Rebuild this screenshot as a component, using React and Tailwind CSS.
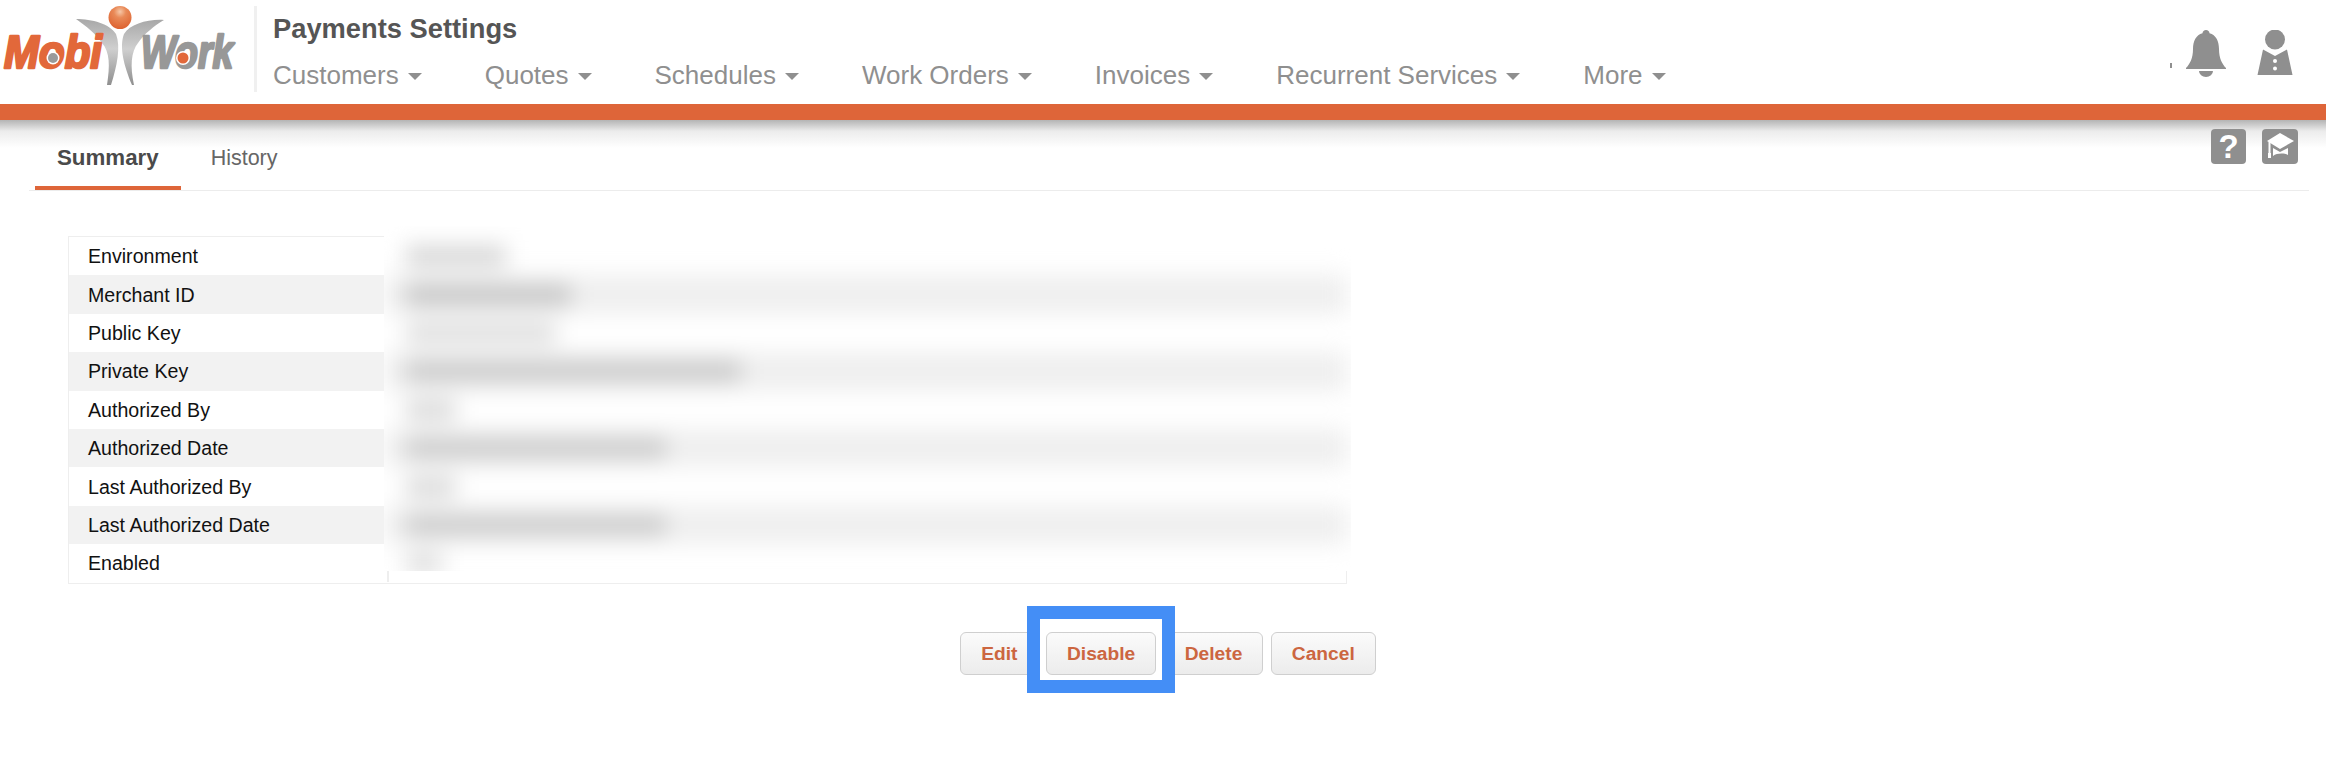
import React from 'react';

const navItems = ['Customers', 'Quotes', 'Schedules', 'Work Orders', 'Invoices', 'Recurrent Services', 'More'];

const rows = [
    { label: 'Environment', width: 'w-[100px]', tone: 'bg-[#d4d4d4]' },
    { label: 'Merchant ID', width: 'w-[165px]', tone: 'bg-[#c4c4c4]' },
    { label: 'Public Key', width: 'w-[150px]', tone: 'bg-[#dcdcdc]' },
    { label: 'Private Key', width: 'w-[335px]', tone: 'bg-[#c8c8c8]' },
    { label: 'Authorized By', width: 'w-[50px]', tone: 'bg-[#d8d8d8]' },
    { label: 'Authorized Date', width: 'w-[260px]', tone: 'bg-[#cacaca]' },
    { label: 'Last Authorized By', width: 'w-[50px]', tone: 'bg-[#d8d8d8]' },
    { label: 'Last Authorized Date', width: 'w-[260px]', tone: 'bg-[#cacaca]' },
    { label: 'Enabled', width: 'w-[36px]', tone: 'bg-[#dcdcdc]' },
];

const buttons = ['Edit', 'Disable', 'Delete', 'Cancel'];

const Logo = () => (
    <svg width="254" height="100" viewBox="0 0 254 100" className="shrink-0">
        <defs>
            <radialGradient id="ball" cx="50%" cy="25%" r="75%">
                <stop offset="0%" stopColor="#f6c8a8" />
                <stop offset="35%" stopColor="#e98a58" />
                <stop offset="100%" stopColor="#dd6230" />
            </radialGradient>
            <linearGradient id="limb" x1="0" y1="0" x2="0" y2="1">
                <stop offset="0%" stopColor="#a8a8a8" />
                <stop offset="45%" stopColor="#cfcfcf" />
                <stop offset="100%" stopColor="#8f8f8f" />
            </linearGradient>
        </defs>
        <path d="M76 19 C92 19 110 24 116 34 C121 47 117 66 111 85 L107 85 C110 66 110 52 102 43 C96 34 86 26 76 19 Z" fill="url(#limb)" />
        <path d="M164 20 C148 19 130 24 124 34 C119 47 124 66 132 85 L134 85 C130 66 131 52 138 43 C144 34 154 26 164 20 Z" fill="url(#limb)" />
        <circle cx="120" cy="17.500" r="11.500" fill="url(#ball)" />
        <text x="4" y="68" textLength="98" lengthAdjust="spacingAndGlyphs" fontFamily="Liberation Sans" fontStyle="italic" fontWeight="700" fontSize="46" fill="#e2683a" stroke="#e2683a" strokeWidth="2.600" strokeLinejoin="round">Mobi</text>
        <circle cx="53" cy="58" r="6.500" fill="#fff" />
        <circle cx="53" cy="58" r="5" fill="#9a9a9a" />
        <text x="141" y="68" textLength="92" lengthAdjust="spacingAndGlyphs" fontFamily="Liberation Sans" fontStyle="italic" fontWeight="700" fontSize="46" fill="#989898" stroke="#989898" strokeWidth="2.600" strokeLinejoin="round">Work</text>
        <circle cx="183" cy="58" r="7" fill="#fff" />
        <circle cx="183" cy="58" r="5.500" fill="#e2683a" />
    </svg>
);

const Bell = () => (
    <svg width="42" height="47" viewBox="0 0 42 47" fill="#8f8f8f">
        <path d="M21 0 C23 0 24.500 1.500 24.500 3.200 C31 5 34 11 34 19 C34 28 37 34 41 38 L41 39 L1 39 L1 38 C5 34 8 28 8 19 C8 11 11 5 17.500 3.200 C17.500 1.500 19 0 21 0 Z" />
        <path d="M14 41 H28 A7 6 0 0 1 14 41 Z" />
    </svg>
);

const Person = () => (
    <svg width="36" height="46" viewBox="0 0 36 46" fill="#8f8f8f">
        <circle cx="18" cy="9.500" r="10" />
        <path d="M6 19.500 L18 26 L30 19.500 L35.500 45 L0.500 45 Z" />
        <circle cx="18" cy="31" r="2" fill="#fff" />
        <circle cx="18" cy="38.500" r="2" fill="#fff" />
    </svg>
);

const Cap = () => (
    <svg width="36" height="35" viewBox="0 0 36 35" fill="#fff">
        <path d="M18 4 L32 12 L18 20 L5 12 Z" />
        <path d="M11 19 L18 23 L26 19 V26 C22 24 15 24 11 27 Z" />
        <rect x="6.500" y="13" width="2" height="11" />
        <rect x="6" y="24" width="3" height="5" />
    </svg>
);

const App = () => {
    return (
        <div className="min-h-[764px] bg-white font-['Liberation_Sans',Arial,sans-serif]">
            <header className="flex h-[104px] items-start overflow-hidden">
                <Logo />
                <div className="mt-[6px] h-[86px] w-[3px] shrink-0 bg-[#f0f0f0]" />
                <div className="ml-[16px]">
                    <h1 className="mt-[13px] text-[27.300px] font-bold leading-[32px] text-[#555]">Payments Settings</h1>
                    <nav className="mt-[15px] flex gap-[63px]">
                        {navItems.map((item) => (
                            <span key={item} className="flex items-center text-[26px] leading-[30px] text-[#8f8f8f]">
                                {item}
                                <span className="ml-[9px] mt-[3px] h-0 w-0 border-x-[7px] border-t-[7px] border-x-transparent border-t-[#8f8f8f]" />
                            </span>
                        ))}
                    </nav>
                </div>
                <div className="ml-auto mr-[33px] mt-[30px] flex items-start">
                    <div className="mr-[13px] mt-[33px] h-[5px] w-[2px] bg-[#8f8f8f]" />
                    <Bell />
                    <div className="ml-[30px]"><Person /></div>
                </div>
            </header>
            <div className="h-4 bg-[#de6539]" />

            <div className="relative">
                {/* soft shadow that falls from the orange bar */}
                <div className="absolute inset-x-0 top-0 h-[28px] bg-gradient-to-b from-[#b4b4b4] via-[#ececec] via-40% to-white" />
                <div className="relative ml-[29px] mr-[17px] flex h-[71px] justify-between border-b border-[#ececec] pr-[11px]">
                    <div className="ml-[6px] flex items-end gap-[30px]">
                        <span className="flex h-[60px] items-center border-b-4 border-[#de6539] px-[22px] text-[22.300px] font-bold text-[#4a4a4a]">Summary</span>
                        <span className="flex h-[60px] items-center border-b-4 border-transparent text-[21.500px] text-[#666]">History</span>
                    </div>
                    <div className="mt-[9px] flex gap-[16px]">
                        <div className="flex h-[35px] w-[35px] items-center justify-center rounded-[4px] bg-[#8f8f8f] text-[33px] font-bold leading-none text-white">?</div>
                        <div className="h-[35px] w-[36px] rounded-[4px] bg-[#8f8f8f]"><Cap /></div>
                    </div>
                </div>
            </div>

            <div className="relative ml-[68px] mt-[45px] w-[1279px] border border-[#eeeeee]">
                {rows.map((row, index) => (
                    <div key={row.label} className={`flex h-[38.400px] items-center ${index % 2 === 1 ? 'bg-[#f2f2f2]' : 'bg-white'}`}>
                        <div className="w-[320px] border-r-2 border-[#eeeeee] pl-[19px] text-[19.600px] leading-[38px] text-[#111]">{row.label}</div>
                    </div>
                ))}
                {/* the values are blurred in the source picture */}
                <div className="absolute bottom-[12px] left-[315px] top-[-11px] w-[967px] overflow-hidden bg-white">
                    <div className="pt-[11px] blur-[11px]">
                        {rows.map((row, index) => (
                            <div key={row.label} className={`flex h-[38.400px] items-center pl-[22px] ${index % 2 === 1 ? 'mr-[4px] bg-[#efefef]' : 'bg-white'}`}>
                                <div className={`h-[20px] ${row.width} ${row.tone}`} />
                            </div>
                        ))}
                    </div>
                </div>
            </div>

            <div className="mt-[48px] flex justify-center gap-[7.500px] pl-[10px]">
                {buttons.map((label) => (
                    <div key={label} className="relative">
                        {label === 'Disable' && (
                            <div className="absolute left-[-19px] top-[-26px] z-10 h-[87px] w-[148px] border-[13px] border-[#448ef6] bg-white" />
                        )}
                        <button className={`relative h-[43px] rounded-[6px] border border-[#cfcfcf] bg-gradient-to-b from-[#fbfbfb] to-[#ececec] px-[20px] pt-[2px] text-[19.200px] font-bold text-[#cc6640] ${label === 'Disable' ? 'z-20' : ''}`}>
                            {label}
                        </button>
                    </div>
                ))}
            </div>
        </div>
    );
};

export default App;
